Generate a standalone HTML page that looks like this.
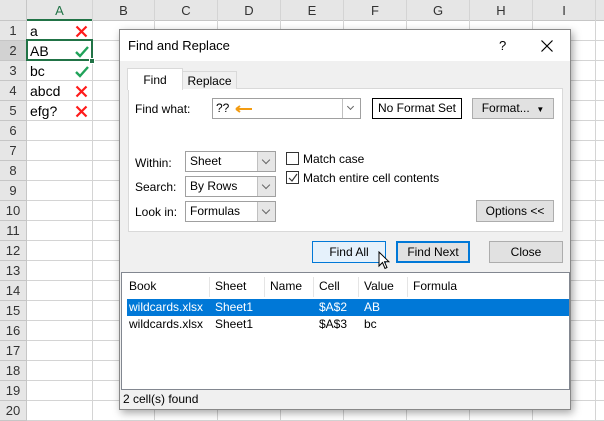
<!DOCTYPE html><html><head><style>
*{margin:0;padding:0;box-sizing:border-box}
body{width:604px;height:421px;overflow:hidden;background:#fff;font-family:"Liberation Sans",sans-serif;font-size:12px;color:#000;position:relative}
.a{position:absolute}
.hl{position:absolute;left:0;width:604px;height:1px;background:#d4d4d4}
.vl{position:absolute;top:0;height:421px;width:1px;background:#d4d4d4}
.ch{position:absolute;top:0;height:21px;background:#e6e6e6;text-align:center;line-height:21px;font-size:13px;color:#333;border-right:1px solid #c6c6c6;border-bottom:1px solid #c6c6c6}
.rh{position:absolute;left:0;width:27px;height:20px;background:#e6e6e6;text-align:center;line-height:20px;font-size:13px;color:#333;border-bottom:1px solid #c6c6c6;border-right:1px solid #c6c6c6}
.cell{position:absolute;left:30px;font-size:14px;line-height:20px}
.mk{position:absolute;left:75px}
.btn{position:absolute;background:#e1e1e1;border:1px solid #adadad;text-align:center;font-size:12px}
.sel{position:absolute;left:185px;width:91px;height:21px;border:1px solid #a0a0a0;background:#fff;padding-left:4px;line-height:19px}
.sel i{position:absolute;right:0;top:0;width:18px;height:19px;background:#e6e6e6;border-left:1px solid #c0c0c0}
.sel i:after{content:"";position:absolute;left:5px;top:5px;width:5px;height:5px;border-right:1px solid #666;border-bottom:1px solid #666;transform:rotate(45deg)}
.cb{position:absolute;left:286px;width:13px;height:13px;border:1px solid #333;background:#fff}
</style></head><body>
<div class="ch" style="left:0;width:27px"></div>
<div class="ch" style="left:27px;width:66px;border-bottom:2px solid #217346;color:#217346">A</div>
<div class="ch" style="left:93px;width:62px">B</div>
<div class="ch" style="left:155px;width:63px">C</div>
<div class="ch" style="left:218px;width:63px">D</div>
<div class="ch" style="left:281px;width:63px">E</div>
<div class="ch" style="left:344px;width:63px">F</div>
<div class="ch" style="left:407px;width:63px">G</div>
<div class="ch" style="left:470px;width:63px">H</div>
<div class="ch" style="left:533px;width:63px">I</div>
<div class="ch" style="left:596px;width:10px"></div>
<div class="vl" style="left:92px"></div><div class="vl" style="left:154px"></div><div class="vl" style="left:217px"></div><div class="vl" style="left:280px"></div><div class="vl" style="left:343px"></div><div class="vl" style="left:406px"></div><div class="vl" style="left:469px"></div><div class="vl" style="left:532px"></div><div class="vl" style="left:595px"></div>
<div class="hl" style="top:40px"></div><div class="hl" style="top:60px"></div><div class="hl" style="top:80px"></div><div class="hl" style="top:100px"></div><div class="hl" style="top:120px"></div><div class="hl" style="top:140px"></div><div class="hl" style="top:160px"></div><div class="hl" style="top:180px"></div><div class="hl" style="top:200px"></div><div class="hl" style="top:220px"></div><div class="hl" style="top:240px"></div><div class="hl" style="top:260px"></div><div class="hl" style="top:280px"></div><div class="hl" style="top:300px"></div><div class="hl" style="top:320px"></div><div class="hl" style="top:340px"></div><div class="hl" style="top:360px"></div><div class="hl" style="top:380px"></div><div class="hl" style="top:400px"></div><div class="hl" style="top:420px"></div>
<div class="rh" style="top:21px">1</div><div class="rh" style="top:41px;background:#d2d2d2">2</div><div class="rh" style="top:61px">3</div><div class="rh" style="top:81px">4</div><div class="rh" style="top:101px">5</div><div class="rh" style="top:121px">6</div><div class="rh" style="top:141px">7</div><div class="rh" style="top:161px">8</div><div class="rh" style="top:181px">9</div><div class="rh" style="top:201px">10</div><div class="rh" style="top:221px">11</div><div class="rh" style="top:241px">12</div><div class="rh" style="top:261px">13</div><div class="rh" style="top:281px">14</div><div class="rh" style="top:301px">15</div><div class="rh" style="top:321px">16</div><div class="rh" style="top:341px">17</div><div class="rh" style="top:361px">18</div><div class="rh" style="top:381px">19</div><div class="rh" style="top:401px">20</div>
<div class="cell" style="top:21px">a</div>
<div class="cell" style="top:41px">AB</div>
<div class="cell" style="top:61px">bc</div>
<div class="cell" style="top:81px">abcd</div>
<div class="cell" style="top:101px">efg?</div>
<svg class="mk" style="top:25px" width="13" height="13"><path d="M1.5 1.5L11.5 11.5M11.5 1.5L1.5 11.5" stroke="#ff1a1a" stroke-width="2.2"/></svg>
<svg class="mk" style="top:45px" width="14" height="13"><path d="M1 7L5 11L13 2" stroke="#21a35a" stroke-width="2.4" fill="none"/></svg>
<svg class="mk" style="top:65px" width="14" height="13"><path d="M1 7L5 11L13 2" stroke="#21a35a" stroke-width="2.4" fill="none"/></svg>
<svg class="mk" style="top:85px" width="13" height="13"><path d="M1.5 1.5L11.5 11.5M11.5 1.5L1.5 11.5" stroke="#ff1a1a" stroke-width="2.2"/></svg>
<svg class="mk" style="top:105px" width="13" height="13"><path d="M1.5 1.5L11.5 11.5M11.5 1.5L1.5 11.5" stroke="#ff1a1a" stroke-width="2.2"/></svg>
<div class="a" style="left:26px;top:39px;width:67px;height:22px;border:2px solid #217346"></div>
<div class="a" style="left:89px;top:58px;width:6px;height:6px;background:#217346;border:1px solid #fff"></div>

<div class="a" style="left:119px;top:29px;width:452px;height:381px;background:#f0f0f0;border:1px solid #888;box-shadow:2px 3px 8px rgba(0,0,0,.35)">
<div class="a" style="left:0;top:0;width:450px;height:31px;background:#fff"></div>
<div class="a" style="left:8px;top:8px;font-size:13px">Find and Replace</div>
<div class="a" style="left:379px;top:8px;font-size:13px">?</div>
<svg class="a" style="left:421px;top:10px" width="12" height="12"><path d="M0.5 0.5L11.5 11.5M11.5 0.5L0.5 11.5" stroke="#000" stroke-width="1.2"/></svg>
<div class="a" style="left:8px;top:58px;width:435px;height:144px;background:#fff;border:1px solid #d9d9d9"></div>
<div class="a" style="left:62px;top:41px;width:55px;height:18px;background:#f0f0f0;border:1px solid #d9d9d9;border-bottom:none;text-align:center;line-height:18px">Replace</div>
<div class="a" style="left:7px;top:38px;width:56px;height:22px;background:#fff;border:1px solid #d9d9d9;border-bottom:none;text-align:center;line-height:22px">Find</div>
<div class="a" style="left:15px;top:72px">Find what:</div>
<div class="a" style="left:92px;top:68px;width:149px;height:21px;background:#fff;border:1px solid #a0a0a0;padding-left:3px;line-height:19px">??
<svg style="position:absolute;left:22px;top:6px" width="18" height="8"><path d="M1 4H17M1 4L5 1M1 4L5 7" stroke="#f39c12" stroke-width="2" fill="none"/></svg>
<span style="position:absolute;right:0;top:0;width:18px;height:19px;border-left:1px solid #c0c0c0;background:#fff"><span style="position:absolute;left:5px;top:5px;width:5px;height:5px;border-right:1px solid #666;border-bottom:1px solid #666;transform:rotate(45deg)"></span></span></div>
<div class="a" style="left:252px;top:68px;width:90px;height:21px;border:1px solid #000;background:#fff;text-align:center;line-height:19px">No Format Set</div>
<div class="btn" style="left:352px;top:68px;width:82px;height:21px;line-height:19px">Format... &nbsp;<span style="font-size:8px">▼</span></div>
<div class="a" style="left:15px;top:126px">Within:</div>
<div class="a" style="left:15px;top:150px">Search:</div>
<div class="a" style="left:15px;top:175px">Look in:</div>
<div class="sel" style="left:65px;top:121px">Sheet<i></i></div>
<div class="sel" style="left:65px;top:146px">By Rows<i></i></div>
<div class="sel" style="left:65px;top:171px">Formulas<i></i></div>
<div class="cb" style="left:166px;top:122px"></div><div class="a" style="left:183px;top:122px">Match case</div>
<div class="cb" style="left:166px;top:141px"><svg style="position:absolute;left:1px;top:1px" width="10" height="10"><path d="M1 5L4 8L9 1" stroke="#333" stroke-width="1.2" fill="none"/></svg></div><div class="a" style="left:183px;top:141px">Match entire cell contents</div>
<div class="btn" style="left:356px;top:170px;width:78px;height:22px;line-height:20px">Options &lt;&lt;</div>
<div class="btn" style="left:192px;top:211px;width:74px;height:22px;line-height:20px;background:#e5f1fb;border-color:#0078d7">Find All</div>
<div class="btn" style="left:276px;top:211px;width:74px;height:22px;line-height:18px;border:2px solid #0078d7">Find Next</div>
<svg class="a" style="left:258px;top:221px" width="12" height="19"><path d="M1 1V15L4.5 11.5L7 17.5L9 16.5L6.5 10.8H11Z" fill="#fff" stroke="#000" stroke-width="1"/></svg>
<div class="btn" style="left:369px;top:211px;width:74px;height:22px;line-height:20px">Close</div>
<div class="a" style="left:1px;top:242px;width:449px;height:118px;background:#fff;border:1px solid #828790">
<div class="a" style="left:0;top:2px;width:447px;height:23px;font-size:12px;line-height:23px">
<span class="a" style="left:7px">Book</span><span class="a" style="left:93px">Sheet</span><span class="a" style="left:148px">Name</span><span class="a" style="left:197px">Cell</span><span class="a" style="left:242px">Value</span><span class="a" style="left:291px">Formula</span>
<span class="a" style="left:87px;top:2px;width:1px;height:20px;background:#e5e5e5"></span><span class="a" style="left:142px;top:2px;width:1px;height:20px;background:#e5e5e5"></span><span class="a" style="left:191px;top:2px;width:1px;height:20px;background:#e5e5e5"></span><span class="a" style="left:236px;top:2px;width:1px;height:20px;background:#e5e5e5"></span><span class="a" style="left:285px;top:2px;width:1px;height:20px;background:#e5e5e5"></span></div>
<div class="a" style="left:5px;top:26px;width:442px;height:17px;background:#0078d7;color:#fff;line-height:17px"><span class="a" style="left:2px">wildcards.xlsx</span><span class="a" style="left:88px">Sheet1</span><span class="a" style="left:192px">$A$2</span><span class="a" style="left:237px">AB</span></div>
<div class="a" style="left:5px;top:43px;width:442px;height:17px;line-height:17px"><span class="a" style="left:2px">wildcards.xlsx</span><span class="a" style="left:88px">Sheet1</span><span class="a" style="left:192px">$A$3</span><span class="a" style="left:237px">bc</span></div>
</div>
<div class="a" style="left:3px;top:362px">2 cell(s) found</div>
</div>
</body></html>
